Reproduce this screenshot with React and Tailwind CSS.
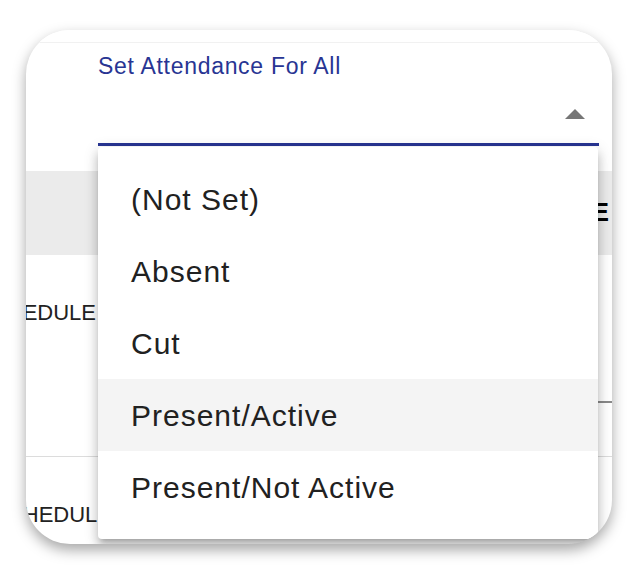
import React from "react";

const items = ["(Not Set)", "Absent", "Cut", "Present/Active", "Present/Not Active"];

export default function App() {
  return (
    <div className="w-[640px] h-[578px] bg-white pt-[30px] pl-[26px] font-['Liberation_Sans',Arial,sans-serif]">
      <div className="relative w-[586px] h-[514px] rounded-[44px] overflow-hidden bg-white shadow-[0_6px_14px_rgba(0,0,0,0.35)]">
        {/* select area */}
        <div className="h-[141px] flex flex-col">
          <div className="h-[13px] border-b border-[#f1f1f1] bg-white" />
          <div className="ml-[72px] w-[501px] pt-[11px] flex flex-col">
            <div className="text-[23px] leading-[24px] tracking-[0.7px] text-[#283593]">Set Attendance For All</div>
            <div className="mt-[31px] flex justify-end pr-[14px]">
              <svg width="20" height="10" viewBox="0 0 20 10">
                <polygon points="0,10 10,0 20,10" fill="#767676" />
              </svg>
            </div>
            <div className="mt-[24px] h-[3px] bg-[#283593]" />
          </div>
        </div>
        {/* header row */}
        <div className="h-[84px] bg-[#ebebeb] flex items-center">
          <div className="w-[583px] flex justify-end overflow-hidden">
            <span className="whitespace-nowrap text-[25px] font-bold text-black">SCHEDULE</span>
          </div>
        </div>
        {/* row 1 */}
        <div className="h-[202px] border-b border-[#dcdcdc] flex items-start">
          <div className="w-[70px] flex justify-end overflow-hidden pt-[46px]">
            <span className="whitespace-nowrap text-[22px] leading-[24px] text-[#222]">SCHEDULE</span>
          </div>
          <div className="flex-1" />
          <div className="w-[160px] h-[148px] border-b-2 border-[#8a8a8a]" />
        </div>
        {/* row 2 */}
        <div className="flex items-start">
          <div className="w-[86px] flex justify-end overflow-hidden pt-[46px]">
            <span className="whitespace-nowrap text-[22px] leading-[24px] text-[#222]">SCHEDULE</span>
          </div>
        </div>

        {/* dropdown menu */}
        <div className="absolute left-[72px] top-[117px] w-[500px] bg-white rounded-[4px] py-[16px] shadow-[0_5px_5px_-3px_rgba(0,0,0,0.2),0_8px_10px_1px_rgba(0,0,0,0.14),0_3px_14px_2px_rgba(0,0,0,0.12)]">
          {items.map((t, i) => (
            <div
              key={t}
              className={
                i === 3
                  ? "h-[72px] flex items-center pl-[33px] text-[30px] tracking-[1px] text-[#212121] bg-[#f4f4f4]"
                  : "h-[72px] flex items-center pl-[33px] text-[30px] tracking-[1px] text-[#212121]"
              }
            >
              {t}
            </div>
          ))}
        </div>
      </div>
    </div>
  );
}
